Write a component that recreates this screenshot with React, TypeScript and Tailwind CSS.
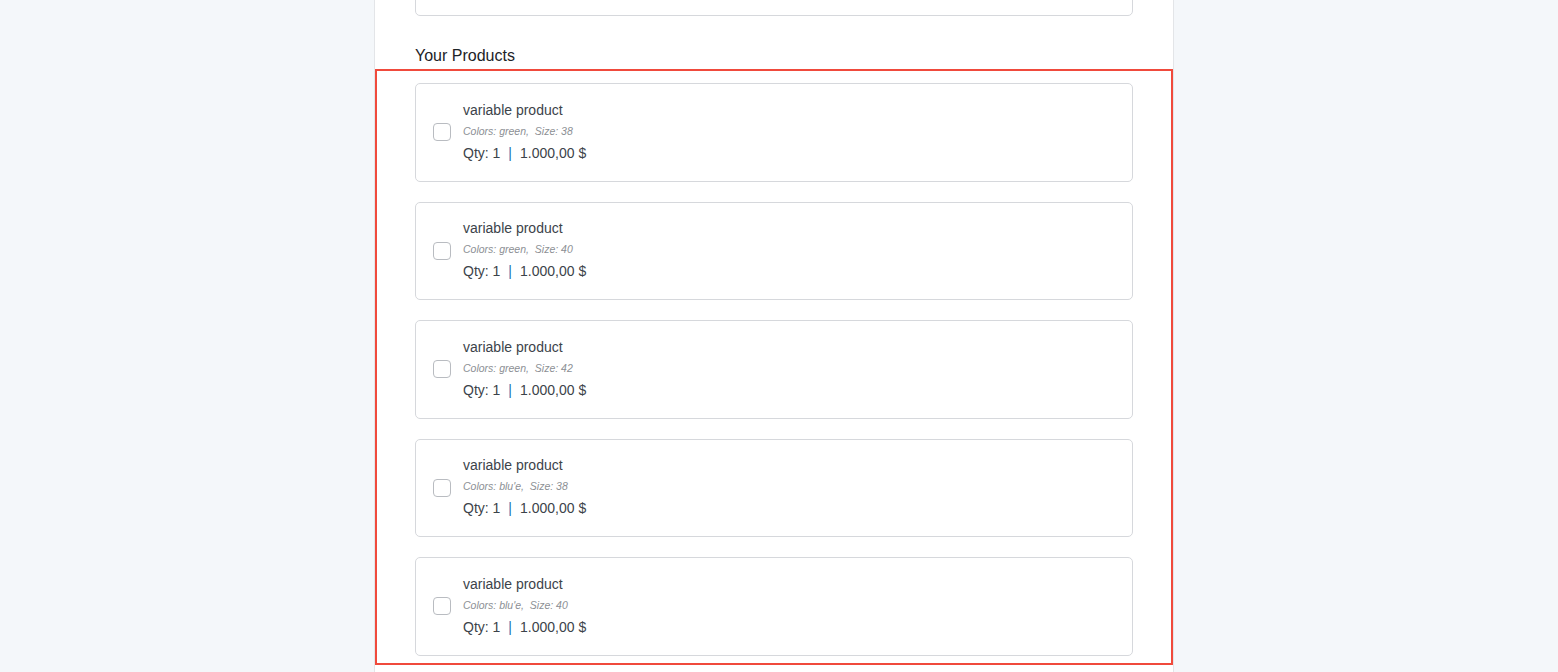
const products = [
    { name: 'variable product', color: 'green', size: '38', qty: 1, price: '1.000,00 $' },
    { name: 'variable product', color: 'green', size: '40', qty: 1, price: '1.000,00 $' },
    { name: 'variable product', color: 'green', size: '42', qty: 1, price: '1.000,00 $' },
    { name: 'variable product', color: "blu'e", size: '38', qty: 1, price: '1.000,00 $' },
    { name: 'variable product', color: "blu'e", size: '40', qty: 1, price: '1.000,00 $' },
];

function ProductCard({ product }: { product: (typeof products)[number] }) {
    return (
        <label className="flex h-[98.5px] items-center rounded-[5px] border border-[#d6d8dc] bg-white pl-[17px]">
            <span className="h-[18px] w-[18px] shrink-0 rounded-[4px] border border-[#b9bcc1] bg-white" />
            <div className="ml-[12px] flex flex-col">
                <span className="text-[14px] leading-[19px] text-[#3c434a]">{product.name}</span>
                <span className="text-[10.5px] italic leading-[23px] text-[#8c8f94]">
                    Colors: {product.color},&nbsp; Size: {product.size}
                </span>
                <span className="text-[14px] leading-[21px] text-[#3c434a]">
                    Qty: {product.qty}
                    <span className="mx-[8px] text-[#2271b1]">|</span>
                    {product.price}
                </span>
            </div>
        </label>
    );
}

export default function App() {
    return (
        <div
            className="h-[672px] overflow-hidden bg-[#f4f7fa]"
            style={{ fontFamily: '"Liberation Sans", Arial, sans-serif' }}
        >
            <div className="ml-[374px] flow-root min-h-full w-[800px] border-x border-[#e3e5e8] bg-white">
                {/* previous section, scrolled mostly out of view */}
                <div className="mx-10 -mt-[44px] flex h-[60px] items-center rounded-[5px] border border-[#d6d8dc] px-[13px]">
                    <span className="-mt-[2px] h-[16px] w-[16px] rounded-full border border-[#c3c4c7]" />
                </div>

                <h2 className="mx-10 mt-[28px] mb-[1px] text-[16px] leading-[24px] text-[#1d2327]">Your Products</h2>

                <div className="border-2 border-[#f04a3c] px-[38px] pt-[12px] pb-[7px]">
                    <div className="flex flex-col gap-[20px]">
                        {products.map((p, i) => (
                            <ProductCard key={i} product={p} />
                        ))}
                    </div>
                </div>
            </div>
        </div>
    );
}
